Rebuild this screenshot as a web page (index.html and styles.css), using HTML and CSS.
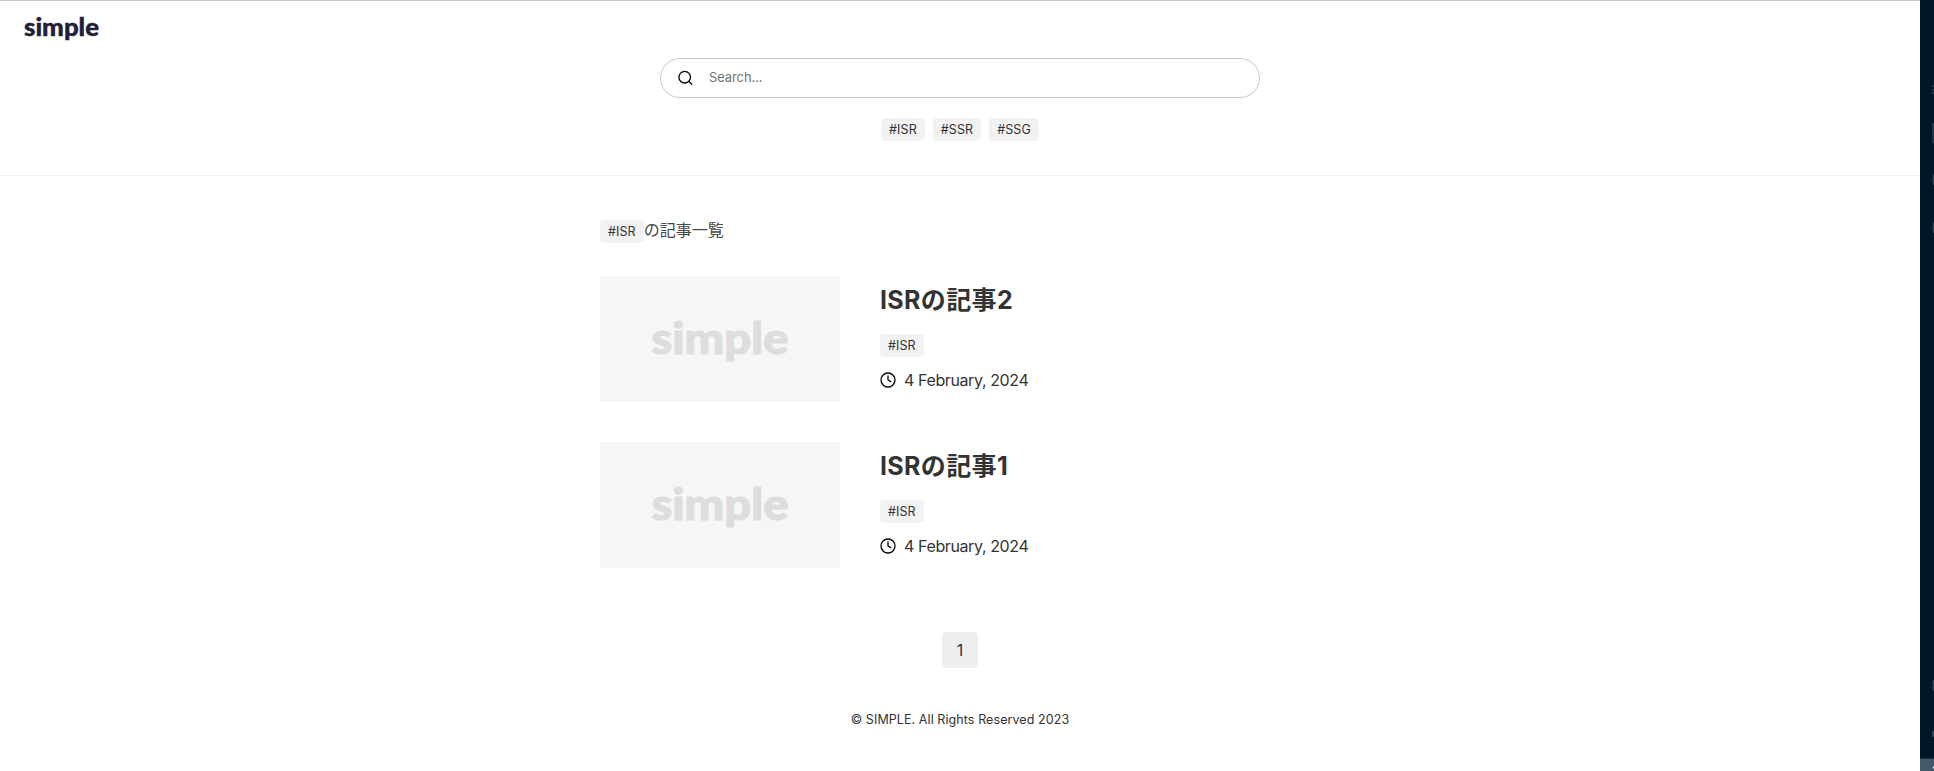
FILE: index.html
```html
<!DOCTYPE html>
<html lang="ja">
<head>
<meta charset="utf-8">
<title>simple</title>
<link rel="stylesheet" href="styles.css">
</head>
<body>
<div class="page">
  <header class="header">
    <a class="logo"><svg width="80" height="34" viewBox="0 0 80 34"><text class="logo-text" x="0" y="20" textLength="75" lengthAdjust="spacingAndGlyphs">simple</text></svg></a>
    <label class="search">
      <svg class="icon" width="16" height="16" viewBox="0 0 16 16"><circle cx="6.700" cy="7.2" r="5.800"/><path d="M11 11.400 13.700 14.200"/></svg>
      <input class="search-input" type="text" placeholder="Search...">
    </label>
    <nav class="tags"><a class="tag">#ISR</a><a class="tag">#SSR</a><a class="tag">#SSG</a></nav>
  </header>
  <main class="main">
    <p class="heading"><a class="tag">#ISR</a><span class="heading-text">の記事一覧</span></p>
    <article class="card">
      <svg class="thumb" width="240" height="126" viewBox="0 0 240 126"><text class="thumb-text" x="51.500" y="77.500" textLength="137" lengthAdjust="spacingAndGlyphs">simple</text></svg>
      <div class="card-body">
        <h2 class="title">ISRの記事2</h2>
        <a class="tag">#ISR</a>
        <div class="date"><svg class="icon" width="16" height="16" viewBox="0 0 16 16"><circle cx="8" cy="8" r="7"/><path d="M8 3.8V8l2.8 1.6"/></svg>4 February, 2024</div>
      </div>
    </article>
    <article class="card">
      <svg class="thumb" width="240" height="126" viewBox="0 0 240 126"><text class="thumb-text" x="51.500" y="77.500" textLength="137" lengthAdjust="spacingAndGlyphs">simple</text></svg>
      <div class="card-body">
        <h2 class="title">ISRの記事1</h2>
        <a class="tag">#ISR</a>
        <div class="date"><svg class="icon" width="16" height="16" viewBox="0 0 16 16"><circle cx="8" cy="8" r="7"/><path d="M8 3.8V8l2.8 1.6"/></svg>4 February, 2024</div>
      </div>
    </article>
    <div class="pagination"><a class="page-number">1</a></div>
  </main>
  <footer class="footer">© SIMPLE. All Rights Reserved 2023</footer>
</div>
<aside class="editor">
  <svg class="activity" width="14" height="758" viewBox="0 0 14 758">
    <path d="M12 86h2M12 90h2M12 93h2M14 124h-1v18h1M14 174q-2 6 0 11M14 222q-2 6 0 11M14 680q-2 6 0 11"/>
    <path class="account" d="M12 731h2v6h-2z"/>
  </svg>
  <div class="status"><svg width="14" height="12"><path class="remote" d="M14 7.500h-1v2h1"/></svg></div>
</aside>
</body>
</html>
```
FILE: styles.css
```css
* { box-sizing: border-box; }
body {
  margin: 0;
  display: flex;
  height: 771px;
  overflow: hidden;
  background: #fff;
  color: #333;
  font-family: Inter, "Noto Sans CJK JP", sans-serif;
  font-size: 16px;
}
svg { display: block; flex: none; }
.page { width: 1920px; flex: none; border-top: 1px solid #c8c8c8; }
.header {
  height: 175px;
  padding-top: 15px;
  border-bottom: 1px solid #f2f2f2;
  display: flex;
  flex-direction: column;
  align-items: center;
}
.logo { align-self: flex-start; margin-left: 24px; height: 42px; }
.logo svg { overflow: visible; }
.logo-text { font-family: Lato, sans-serif; font-weight: 900; font-size: 24px; fill: #20203a; stroke: #20203a; stroke-width: .4; }
.search {
  display: flex;
  align-items: center;
  gap: 15px;
  width: 600px;
  height: 40px;
  flex: none;
  padding: 0 17px;
  border: 1px solid #c8c8c8;
  border-radius: 20px;
}
.icon { fill: none; stroke: #000; stroke-width: 1.3; stroke-linecap: round; stroke-linejoin: round; }
.search-input { flex: 1; border: 0; padding: 0 0 2px; outline: 0; background: none; font: 13px Inter, sans-serif; letter-spacing: -.1px; }
.search-input::placeholder { color: #757575; }
.tags { display: flex; gap: 8px; margin-top: 20px; }
.tag {
  display: inline-block;
  height: 23px;
  padding: 0 8px;
  border-radius: 4px;
  background: #f2f2f2;
  font-size: 12.500px;
  letter-spacing: .1px;
  line-height: 23px;
}
.main { width: 720px; margin: 44px auto 0; }
.heading { display: flex; height: 56px; margin: 0; }
.heading-text { line-height: 20px; color: #484848; }
.card { display: flex; gap: 40px; margin-bottom: 40px; }
.thumb { background: #f6f6f6; }
.thumb-text { font-family: Lato, sans-serif; font-weight: 900; font-size: 43px; fill: #ddd; stroke: #ddd; stroke-width: 1.1; }
.card-body { padding-top: 4px; }
.title { margin: 0 0 14px; font-size: 25px; line-height: 40px; font-weight: 700; letter-spacing: .35px; }
.card-body .tag { display: block; width: max-content; }
.date { display: flex; align-items: center; gap: 8px; margin-top: 12px; line-height: 22px; letter-spacing: -.39px; }
.pagination { display: flex; justify-content: center; padding-top: 24px; }
.page-number { width: 36px; height: 36px; border-radius: 4px; background: #eee; text-align: center; line-height: 36px; }
.footer { margin-top: 41px; text-align: center; font-size: 12.500px; line-height: 22px; letter-spacing: .08px; }
.editor { width: 14px; background: #011627; }
.activity { fill: none; stroke: #29435a; stroke-width: 1.5; }
.account { fill: #29435a; stroke: none; }
.status { height: 13px; background: #44596b; border-top: 1px solid #222d3d; }
.remote { fill: #fff; }
```
